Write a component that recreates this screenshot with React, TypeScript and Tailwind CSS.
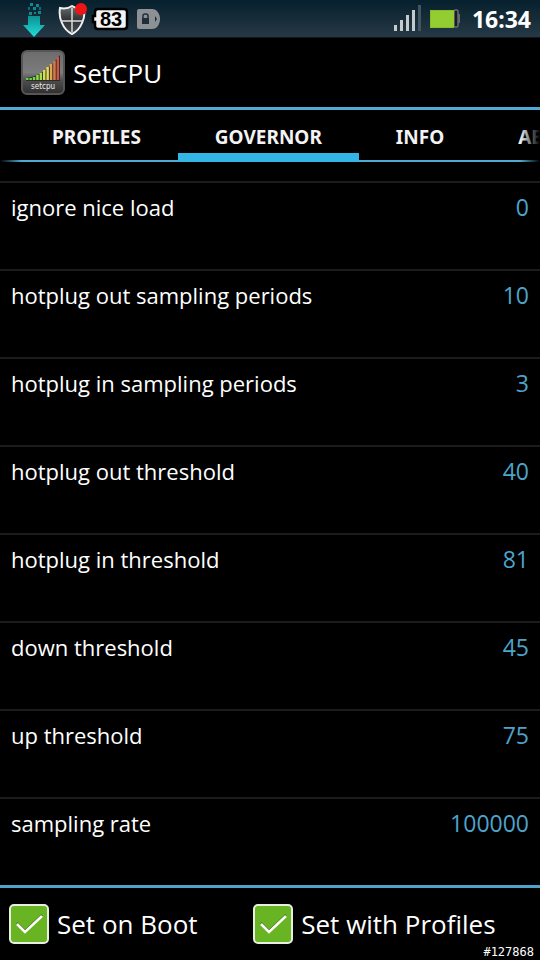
import { useState } from "react";

const tabs = ["PROFILES", "GOVERNOR", "INFO", "ABOUT"];

const settings: [string, string][] = [
  ["ignore nice load", "0"],
  ["hotplug out sampling periods", "10"],
  ["hotplug in sampling periods", "3"],
  ["hotplug out threshold", "40"],
  ["hotplug in threshold", "81"],
  ["down threshold", "45"],
  ["up threshold", "75"],
  ["sampling rate", "100000"],
];

function DownloadIcon() {
  return (
    <svg width="24" height="38" viewBox="0 0 24 38" aria-hidden="true">
      <defs>
        <linearGradient id="arrow" x1="0" y1="0" x2="0" y2="1">
          <stop offset="0" stopColor="#0d8f92" />
          <stop offset="1" stopColor="#1fe0dc" />
        </linearGradient>
      </defs>
      <g fill="#0c8c90">
        <rect x="8" y="3" width="3" height="3" />
        <rect x="14" y="4" width="3" height="3" />
        <rect x="6" y="7" width="2" height="3" opacity=".7" />
        <rect x="11" y="7" width="3" height="3" />
        <rect x="17" y="7" width="2" height="3" opacity=".7" />
        <rect x="7" y="12" width="3" height="3" />
        <rect x="12" y="12" width="2" height="2" />
        <rect x="16" y="11" width="3" height="3" />
      </g>
      <path d="M6 16H18V25H23L12 37L1 25H6Z" fill="url(#arrow)" />
    </svg>
  );
}

function ShieldIcon() {
  return (
    <svg width="30" height="36" viewBox="0 0 30 36" aria-hidden="true">
      <defs>
        <linearGradient id="shield" x1="0" y1="0" x2="0" y2="1">
          <stop offset="0" stopColor="#6a6d70" />
          <stop offset="0.5" stopColor="#303335" />
          <stop offset="1" stopColor="#4b4f53" />
        </linearGradient>
      </defs>
      <path
        d="M2 7C7 8 11 7 14 5C17 7 21 8 26 7C27 13 26 18 24 22C22 27 18 31 14 33C10 31 6 27 4 22C2 18 1 13 2 7Z"
        fill="url(#shield)"
        stroke="#f0f0f0"
        strokeWidth="2"
      />
      <path d="M14 7V31M3 20H25" stroke="#dcdcdc" strokeWidth="1.5" />
      <circle cx="23" cy="8" r="6" fill="#f01414" />
    </svg>
  );
}

function BatteryLevelIcon() {
  return (
    <svg width="38" height="24" viewBox="0 0 38 24" aria-hidden="true">
      <path
        d="M7 2H33Q36 2 36 5V19Q36 22 33 22H7Q4 22 4 19V15H2V9H4V5Q4 2 7 2Z"
        fill="#f4f4f4"
        stroke="#000"
        strokeWidth="2.5"
      />
      <text
        x="20"
        y="19"
        textAnchor="middle"
        fill="#000"
        className="font-['Liberation_Sans',sans-serif] text-[20px] font-bold"
      >
        83
      </text>
    </svg>
  );
}

function LockTagIcon() {
  return (
    <svg width="24" height="20" viewBox="0 0 24 20" aria-hidden="true">
      <path d="M2 0H15C20 0 23 5 23 10C23 15 20 20 15 20H2Q0 20 0 18V2Q0 0 2 0Z" fill="#8d9194" />
      <rect x="5" y="9" width="7" height="6" fill="#1e2f3a" />
      <path d="M6 9V7Q6 5 8 5H9Q11 5 11 7V9" fill="none" stroke="#1e2f3a" strokeWidth="1.5" />
      <path d="M18 7L20 10L18 13Z" fill="#1e2f3a" />
    </svg>
  );
}

function SignalIcon() {
  return (
    <svg width="28" height="28" viewBox="0 0 28 28" aria-hidden="true">
      <g fill="#c5cacd">
        <rect x="0" y="20" width="3" height="6" />
        <rect x="6" y="15" width="3" height="11" />
        <rect x="12" y="10" width="3" height="16" />
        <rect x="18" y="5" width="3" height="21" />
      </g>
      <rect x="24" y="0" width="3" height="26" fill="#435560" />
    </svg>
  );
}

function BatteryIcon() {
  return (
    <svg width="30" height="20" viewBox="0 0 30 20" aria-hidden="true">
      <rect x="24" y="1" width="4" height="17" rx="1" fill="#1b1c1c" stroke="#8b949a" strokeWidth="1" />
      <rect x="28" y="5" width="2" height="9" fill="#626b70" />
      <rect x="0" y="1" width="24" height="18" fill="#86bf29" />
      <rect x="1" y="2" width="23" height="16" fill="#94cd31" />
    </svg>
  );
}

function AppIcon() {
  const bars = [
    { h: 2, c: "#5fd84a" },
    { h: 2, c: "#66da48" },
    { h: 3, c: "#74dc48" },
    { h: 5, c: "#8cdf4a" },
    { h: 7, c: "#a8e04c" },
    { h: 10, c: "#cfe052" },
    { h: 13, c: "#e6d65a" },
    { h: 16, c: "#e0a850" },
    { h: 19, c: "#d67a4e" },
    { h: 23, c: "#cf5548" },
  ];
  return (
    <svg width="44" height="46" viewBox="0 0 44 46" aria-hidden="true">
      <defs>
        <linearGradient id="tile" x1="0" y1="0" x2="0" y2="1">
          <stop offset="0" stopColor="#6c6c6c" />
          <stop offset="0.5" stopColor="#7c7c7c" />
          <stop offset="0.7" stopColor="#4c4c4c" />
          <stop offset="1" stopColor="#2e2e2e" />
        </linearGradient>
      </defs>
      <rect x="1" y="1" width="42" height="43" rx="5" fill="url(#tile)" stroke="#565656" strokeWidth="2" />
      <path d="M5 28C19 27 29 18 39 5V31H5Z" fill="#2c2a22" />
      {bars.map((b, i) => (
        <rect key={i} x={5 + i * 3.4} y={30 - b.h} width="2.5" height={b.h} fill={b.c} />
      ))}
      <text
        x="22"
        y="39"
        textAnchor="middle"
        fill="#f0f0f0"
        className="font-['DejaVu_Sans_Condensed','DejaVu_Sans',sans-serif] text-[8px]"
      >
        setcpu
      </text>
    </svg>
  );
}

function CheckOption({ label }: { label: string }) {
  const [checked, setChecked] = useState(true);
  return (
    <label className="flex items-center gap-2 text-[26px] leading-9">
      <span className="grid">
        <input
          type="checkbox"
          checked={checked}
          onChange={() => setChecked(!checked)}
          className="col-start-1 row-start-1 size-10 appearance-none rounded-[5px] border-2 border-[#e9eee3] bg-[#2b2b2b] checked:bg-[#69b422]"
        />
        {checked && (
          <svg
            viewBox="0 0 40 40"
            className="pointer-events-none col-start-1 row-start-1 size-10"
            fill="none"
            aria-hidden="true"
          >
            <path d="M8 19L16 27L33 11" stroke="#2f5a10" strokeWidth="2" />
            <path d="M8 20L16 28L33 12" stroke="#fff" strokeWidth="2.5" />
          </svg>
        )}
      </span>
      {label}
    </label>
  );
}

export default function App() {
  const [active, setActive] = useState("GOVERNOR");
  return (
    <div className="flex min-h-screen flex-col overflow-hidden bg-black font-['Open_Sans','Noto_Sans',sans-serif] text-white">
      <div className="flex h-[38px] items-center justify-between border-b border-[#10161c] bg-linear-to-b from-[#06202d] to-[#263845] pr-[9px] pl-[22px]">
        <div className="flex items-center">
          <DownloadIcon />
          <div className="ml-3 flex items-center gap-[3px]">
            <ShieldIcon />
            <BatteryLevelIcon />
          </div>
          <div className="ml-2">
            <LockTagIcon />
          </div>
        </div>
        <div className="flex items-center">
          <SignalIcon />
          <div className="ml-2">
            <BatteryIcon />
          </div>
          <time className="ml-3 font-['Noto_Sans',sans-serif] text-[23px] leading-8 font-bold">16:34</time>
        </div>
      </div>

      <header className="flex h-[72px] items-center gap-2 border-b-3 border-[#4fabd2] pl-[21px]">
        <AppIcon />
        <h1 className="text-[26px] leading-9">SetCPU</h1>
      </header>

      <nav className="relative flex h-[52px] overflow-hidden pl-[15px] font-['Noto_Sans',sans-serif]">
        <div className="absolute inset-x-0 bottom-0 h-0.5 bg-linear-to-r from-transparent via-[#4fabd2] from-0% via-4% to-[#4fabd2]" />
        {tabs.map((tab) => (
          <button
            key={tab}
            onClick={() => setActive(tab)}
            className={
              "relative shrink-0 border-b-9 px-[37px] pt-2.5 text-[19px] leading-6 font-bold text-[#f3f3f3] " +
              (tab === active ? "border-[#33b5e5]" : "border-transparent")
            }
          >
            {tab}
          </button>
        ))}
        <div className="pointer-events-none absolute inset-y-0 right-0 w-5 bg-linear-to-r from-transparent to-black" />
      </nav>

      <dl className="grow pt-[19px]">
        {settings.map(([name, value]) => (
          <div
            key={name}
            className="flex h-[88px] items-start justify-between border-t-2 border-[#1c1c1c] px-[11px] pt-2 leading-8"
          >
            <dt className="text-[22px]">{name}</dt>
            <dd className="text-[23px] text-[#4fa3cb]">{value}</dd>
          </div>
        ))}
      </dl>

      <footer className="relative grid h-[75px] grid-cols-[23fr_27fr] items-center border-t-3 border-[#4fa3cb] pl-[9px]">
        <CheckOption label="Set on Boot" />
        <CheckOption label="Set with Profiles" />
        <span className="absolute right-1.5 bottom-0 font-['DejaVu_Sans_Mono',monospace] text-[12px] leading-4">
          #127868
        </span>
      </footer>
    </div>
  );
}
